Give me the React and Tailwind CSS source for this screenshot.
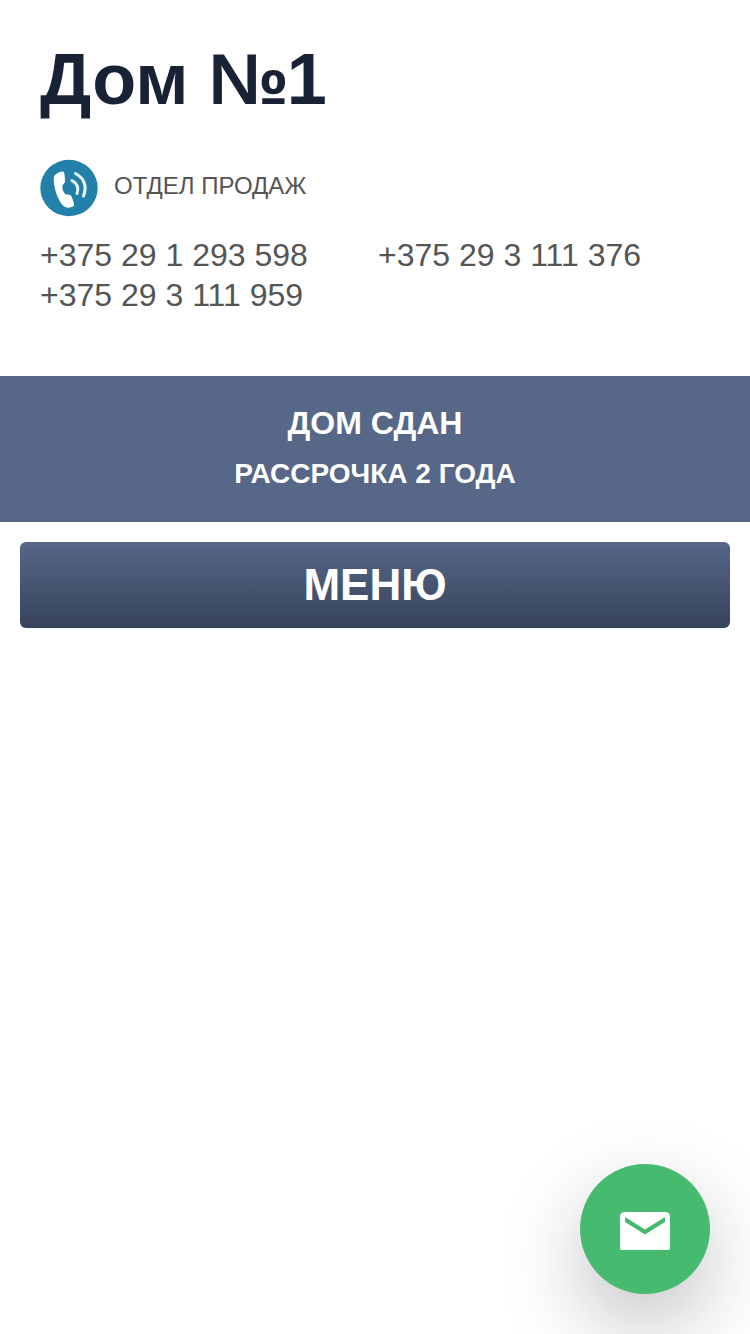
import React from "react";

const phones = ["+375 29 1 293 598", "+375 29 3 111 376", "+375 29 3 111 959"];

const PhoneIcon = () => (
  <svg viewBox="0 0 58 58" className="h-[58px] w-[58px]">
    <ellipse cx="29" cy="29" rx="28.7" ry="28.2" fill="#2380a8" />
    <path
      d="M14 17 Q18 12.5 23 12.5 Q25 13 25 23 Q24 25 22.5 26 Q21.5 31 25.5 35.5 Q29.5 35 31 36.5 Q34.5 44 34 47 Q29 50 25 48 C18.5 44 12.5 27 14 17Z"
      fill="#fff"
    />
    <g fill="none" stroke="#e8f4f8" strokeLinecap="round">
      <path d="M32 21.5 Q40 26 37 34.5" strokeWidth="3" />
      <path d="M35.5 14.5 Q49 22 43.5 37" strokeWidth="3" />
    </g>
  </svg>
);

export default function App() {
  return (
    <div className="min-h-screen bg-white font-['Liberation_Sans',Arial,sans-serif] text-[#555]">
      <header className="h-[376px] px-10 pt-[38px]">
        <h1 className="text-[72px] leading-[82px] font-bold text-[#192135]">
          Дом №<span className="-ml-0.5 tracking-tight">1</span>
        </h1>
        <div className="mt-[39px] flex items-center">
          <PhoneIcon />
          <span className="ml-4 pb-1 text-[24px] leading-[28px]">
            ОТДЕЛ ПРОДАЖ
          </span>
        </div>
        <div className="mt-[18px] grid grid-cols-[338px_1fr] text-[32px] leading-[40px]">
          {phones.map((phone) => (
            <a key={phone} href="#">
              {phone}
            </a>
          ))}
        </div>
      </header>

      <section className="h-[146px] bg-[#576788] pt-[26px] text-center font-bold text-white">
        <p className="text-[32px] leading-[42px]">ДОМ СДАН</p>
        <p className="mt-[10px] text-[28px] leading-[40px]">РАССРОЧКА 2 ГОДА</p>
      </section>

      <div className="px-5 pt-5">
        <button className="h-[86px] w-full rounded-md bg-linear-to-b from-[#576788] to-[#37435b] text-[44px] font-bold text-white">
          МЕНЮ
        </button>
      </div>

      <button className="fixed right-10 bottom-10 flex h-[130px] w-[130px] items-center justify-center rounded-full bg-[#46bb70] shadow-[0_32px_80px_rgba(20,22,30,0.26)]">
        <svg viewBox="0 0 50 38" className="mt-1 h-[38px] w-[50px]">
          <path
            d="M5 0 H45 Q50 0 50 5 V36 Q50 38 48 38 H2 Q0 38 0 36 V5 Q0 0 5 0Z"
            fill="#fff"
          />
          <path d="M5 5 L25 17.5 L45 5 V10 L25 22.5 L5 10Z" fill="#46bb70" />
        </svg>
      </button>
    </div>
  );
}
